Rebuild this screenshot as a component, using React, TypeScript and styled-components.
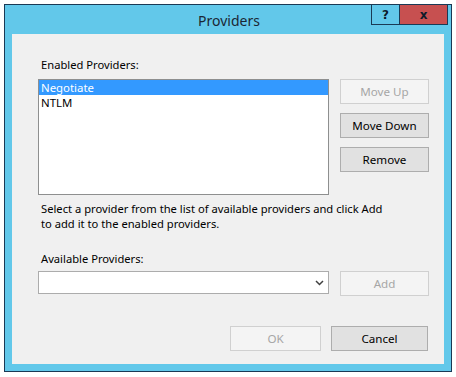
import React from "react";
import styled, { createGlobalStyle } from "styled-components";

const Global = createGlobalStyle`
  html, body { margin: 0; padding: 0; background: #ffffff; }
  body { font-family: "Noto Sans", "Open Sans", sans-serif; font-size: 11.2px; color: #000; }
  * { box-sizing: border-box; }
`;

const Page = styled.div`
  padding: 4px 0 0 4px;
`;

const Window = styled.div`
  width: 448px;
  height: 368px;
  border: 1px solid #1a3a55;
  background: #62c8ea;
  display: flex;
  flex-direction: column;
`;

const TitleBar = styled.div`
  height: 29px;
  display: grid;
  grid-template-columns: 1fr;
  grid-template-rows: 1fr;
`;

const Title = styled.div`
  grid-area: 1 / 1;
  align-self: center;
  justify-self: center;
  font-size: 14px;
  color: #1b2733;
  margin-top: 2px;
  margin-left: 2px;
`;

const Captions = styled.div`
  grid-area: 1 / 1;
  justify-self: end;
  align-self: start;
  display: flex;
  margin-right: 3px;
  height: 20px;
`;

const CapButton = styled.div<{ $close?: boolean }>`
  width: ${(p) => (p.$close ? "48px" : "29px")};
  height: 20px;
  background: ${(p) => (p.$close ? "#c75050" : "#62c8ea")};
  border: 1px solid #1a3a55;
  border-top: none;
  border-left: ${(p) => (p.$close ? "none" : "1px solid #1a3a55")};
  display: flex;
  align-items: center;
  justify-content: center;
  font-family: "DejaVu Sans", sans-serif;
  font-weight: bold;
  font-size: 12px;
  color: #0d1b2a;
`;

const Client = styled.div`
  margin: 0 7px 7px 7px;
  flex: 1;
  background: #f0f0f0;
  padding: 23px 16px 0 26px;
  display: flex;
  flex-direction: column;
`;

const Label = styled.div`
  padding-left: 3px;
  line-height: 15px;
  height: 15px;
`;

const TopRow = styled.div`
  display: grid;
  grid-template-columns: 291px 89px;
  column-gap: 11px;
  margin-top: 7px;
`;

const ListBox = styled.div`
  height: 116px;
  background: #ffffff;
  border: 1px solid #8e8f8f;
  padding: 0;
  display: flex;
  flex-direction: column;
`;

const ListItem = styled.div<{ $selected?: boolean }>`
  height: 15px;
  line-height: 15px;
  padding-left: 2px;
  background: ${(p) => (p.$selected ? "#3399ff" : "transparent")};
  color: ${(p) => (p.$selected ? "#ffffff" : "#000000")};
  font-size: 11.4px;
`;

const ButtonColumn = styled.div`
  display: flex;
  flex-direction: column;
  gap: 9px;
`;

const Button = styled.div<{ $disabled?: boolean; $w?: number }>`
  width: ${(p) => (p.$w ? `${p.$w}px` : "89px")};
  height: 25px;
  display: flex;
  align-items: center;
  justify-content: center;
  background: ${(p) => (p.$disabled ? "#f4f4f4" : "#e1e1e1")};
  border: 1px solid ${(p) => (p.$disabled ? "#d0d0d0" : "#adadad")};
  color: ${(p) => (p.$disabled ? "#a6a6a6" : "#000000")};
  font-size: 11.6px;
`;

const Description = styled.div`
  margin-top: 6px;
  padding-left: 3px;
  line-height: 15px;
`;

const AvailLabel = styled(Label)`
  margin-top: 20px;
`;

const ComboRow = styled.div`
  display: grid;
  grid-template-columns: 291px 89px;
  column-gap: 11px;
  margin-top: 5px;
  align-items: start;
`;

const Combo = styled.div`
  height: 23px;
  background: #ffffff;
  border: 1px solid #acacac;
  display: flex;
  align-items: center;
  justify-content: flex-end;
  padding-right: 4px;
`;

const Footer = styled.div`
  margin-top: auto;
  margin-bottom: 13px;
  display: flex;
  justify-content: flex-end;
  gap: 10px;
`;

export default function App() {
  return (
    <>
      <Global />
      <Page>
        <Window>
          <TitleBar>
            <Title>Providers</Title>
            <Captions>
              <CapButton>?</CapButton>
              <CapButton $close>x</CapButton>
            </Captions>
          </TitleBar>
          <Client>
            <Label>Enabled Providers:</Label>
            <TopRow>
              <ListBox>
                <ListItem $selected>Negotiate</ListItem>
                <ListItem>NTLM</ListItem>
              </ListBox>
              <ButtonColumn>
                <Button $disabled>Move Up</Button>
                <Button>Move Down</Button>
                <Button>Remove</Button>
              </ButtonColumn>
            </TopRow>
            <Description>
              Select a provider from the list of available providers and click Add
              <br />
              to add it to the enabled providers.
            </Description>
            <AvailLabel>Available Providers:</AvailLabel>
            <ComboRow>
              <Combo>
                <svg width="9" height="6" viewBox="0 0 9 6">
                  <path d="M1 1 L4.5 4.5 L8 1" stroke="#404040" strokeWidth="1.5" fill="none" />
                </svg>
              </Combo>
              <Button $disabled>Add</Button>
            </ComboRow>
            <Footer>
              <Button $disabled $w={91}>OK</Button>
              <Button $w={97}>Cancel</Button>
            </Footer>
          </Client>
        </Window>
      </Page>
    </>
  );
}
